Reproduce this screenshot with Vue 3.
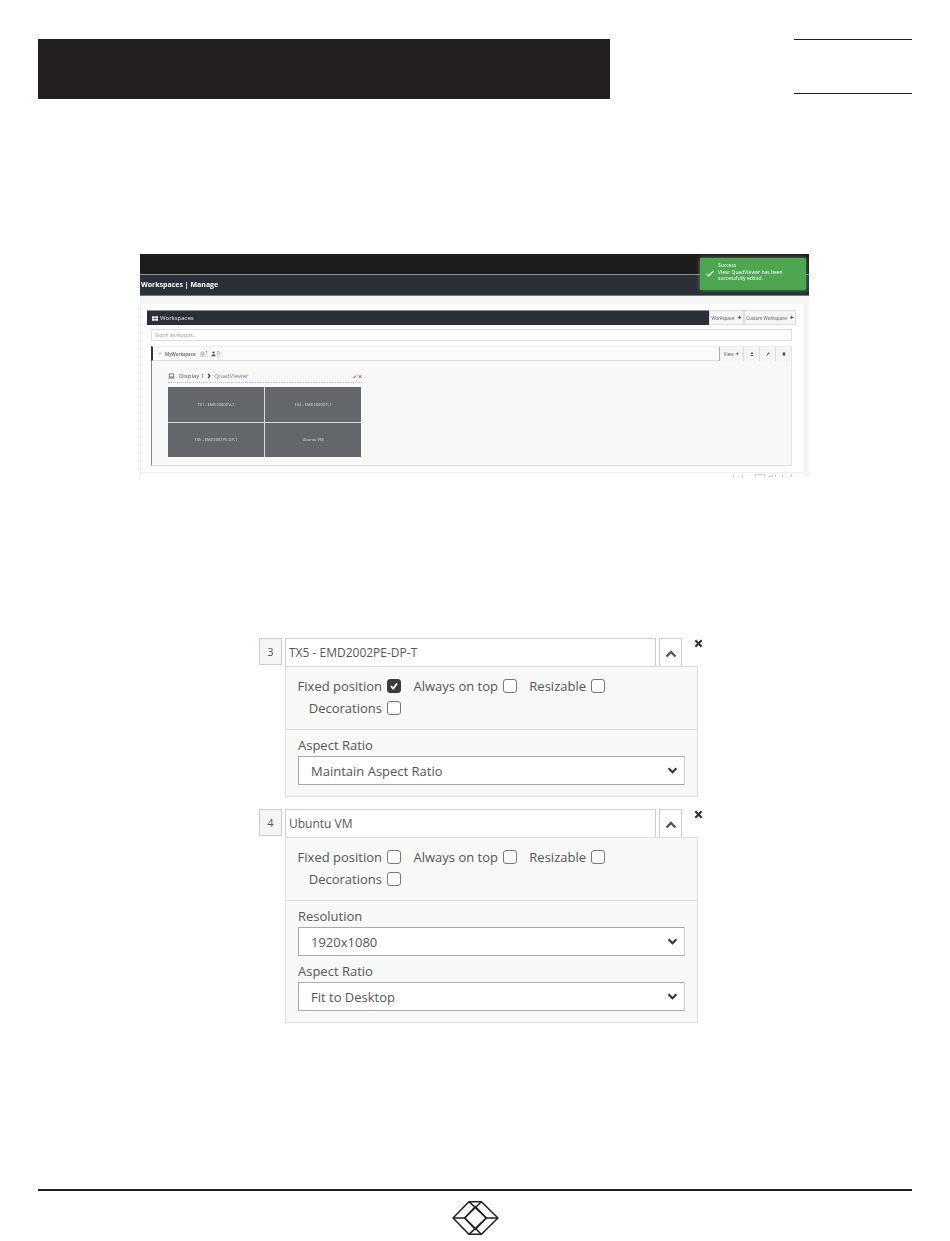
<template>
  <div class="page">
    <header class="top">
      <div class="top-bar"></div>
      <div class="top-tab"></div>
    </header>

    <!-- screenshot of the workspaces page -->
    <section class="shot">
      <div class="shot-top"></div>
      <div class="shot-nav">Workspaces | Manage</div>

      <div class="toast">
        <svg class="toast-check" viewBox="0 0 12 10"><path d="M1 5.5 4.2 8.6 11 1.4" /></svg>
        <div>
          <div>Success</div>
          <div>View: QuadViewer has been successfully edited.</div>
        </div>
      </div>

      <div class="shot-body">
        <div class="ws-panel">
          <div class="ws-head">
            <div class="ws-title">
              <svg class="ws-grid" viewBox="0 0 8 6"><path d="M0 0h3.6v2.7H0zM4.4 0H8v2.7H4.4zM0 3.3h3.6V6H0zM4.4 3.3H8V6H4.4z" /></svg>
              Workspaces
            </div>
            <div class="ws-btn w1">Workspace <b>+</b></div>
            <div class="ws-btn w2">Custom Workspace <b>+</b></div>
          </div>

          <div class="ws-search">Search workspaces...</div>

          <div class="ws-item">
            <div class="ws-item-head">
              <svg class="ws-chev" viewBox="0 0 8 5"><path d="M1 4 4 1l3 3" /></svg>
              <span class="ws-name">MyWorkspace</span>
              <span class="ws-count">
                <svg viewBox="0 0 10 8"><path d="M2 1h6v4.5H2zM.5 7h9" /></svg>1
              </span>
              <span class="ws-count">
                <svg viewBox="0 0 8 8"><circle cx="4" cy="2.4" r="1.8" class="fill" /><path d="M.8 8c0-3 6.400-3 6.400 0z" class="fill" /></svg>0
              </span>
              <div class="ws-tools">
                <span class="tool view">View <b>+</b></span>
                <span class="tool">
                  <svg viewBox="0 0 8 8"><circle cx="4" cy="2.400" r="1.800" class="fill" /><path d="M.8 8c0-3 6.400-3 6.400 0z" class="fill" /></svg>
                </span>
                <span class="tool">
                  <svg viewBox="0 0 8 8"><path d="M1.200 6.800 5 3" class="thick" /><circle cx="5.600" cy="2.400" r="1.400" class="fill" /></svg>
                </span>
                <span class="tool">
                  <svg viewBox="0 0 8 8"><path d="M1.500 1h5v6h-5z" class="fill" /></svg>
                </span>
              </div>
            </div>

            <div class="ws-item-body">
              <div class="display-row">
                <svg class="laptop" viewBox="0 0 10 8"><path d="M2 1h6v4.500H2zM.5 7h9" /></svg>
                <span>Display 1</span>
                <svg class="crumb" viewBox="0 0 6 8"><path d="M1.500 1 4.500 4 1.500 7" /></svg>
                <span class="view-link">QuadViewer</span>
                <span class="display-tools">
                  <svg viewBox="0 0 8 8"><path d="M1 7 6 2" class="thick" /></svg>
                  <svg class="red" viewBox="0 0 8 8"><path d="M1.500 1.500l5 5M6.500 1.500l-5 5" class="thick" /></svg>
                </span>
              </div>
              <div class="quad">
                <div v-for="c in quadCells" :key="c" class="quad-cell">{{ c }}</div>
              </div>
            </div>
          </div>

          <div class="pager">
            <span class="pg">«</span><span class="pg">‹</span>
            <span class="pg-input"></span><span class="pg-of">of 1</span>
            <span class="pg">›</span><span class="pg">»</span>
          </div>
        </div>
      </div>
    </section>

    <!-- window settings form -->
    <section class="form">
      <div v-for="w in windows" :key="w.num" class="win">
        <div class="win-head">
          <div class="win-num">{{ w.num }}</div>
          <div class="win-name">{{ w.name }}</div>
          <div class="win-toggle">
            <svg viewBox="0 0 12 8"><path d="M1.500 6.500 6 2l4.500 4.500" /></svg>
          </div>
          <svg class="win-close" viewBox="0 0 10 10"><path d="M1.500 1.500l7 7M8.500 1.500l-7 7" /></svg>
        </div>
        <div class="win-panel">
          <div class="opts">
            <label v-for="o in w.options" :key="o.label" class="opt">
              {{ o.label }}
              <span class="box" :class="{ checked: o.on }">
                <svg v-if="o.on" viewBox="0 0 12 12"><path d="M3 6.200 5.200 8.500 9 3.500" /></svg>
              </span>
            </label>
          </div>
          <div class="fields">
            <div v-for="f in w.fields" :key="f.label" class="field">
              <div class="field-label">{{ f.label }}</div>
              <div class="select">
                {{ f.value }}
                <svg viewBox="0 0 12 8"><path d="M1.500 1.500 6 6l4.500-4.500" /></svg>
              </div>
            </div>
          </div>
        </div>
      </div>
    </section>

    <footer class="foot">
      <svg class="logo" viewBox="0 0 139 102">
        <path d="M2 51 50 2H87L137 51 87 100H50Z" />
        <path d="M37 51 69 17 102 51 69 85Z" />
        <path d="M50 2 102 51 50 100M87 2 37 51 87 100M2 51H37M102 51H137" />
      </svg>
    </footer>
  </div>
</template>

<script setup>
const quadCells = ['TX1 - EMD2000DV-T', 'TX4 - EMD2000DP-T', 'TX5 - EMD2002PE-DP-T', 'Ubuntu VM']

const windows = [
  {
    num: 3,
    name: 'TX5 - EMD2002PE-DP-T',
    options: [
      { label: 'Fixed position', on: true },
      { label: 'Always on top', on: false },
      { label: 'Resizable', on: false },
      { label: 'Decorations', on: false }
    ],
    fields: [{ label: 'Aspect Ratio', value: 'Maintain Aspect Ratio' }]
  },
  {
    num: 4,
    name: 'Ubuntu VM',
    options: [
      { label: 'Fixed position', on: false },
      { label: 'Always on top', on: false },
      { label: 'Resizable', on: false },
      { label: 'Decorations', on: false }
    ],
    fields: [
      { label: 'Resolution', value: '1920x1080' },
      { label: 'Aspect Ratio', value: 'Fit to Desktop' }
    ]
  }
]
</script>

<style>
body { background: #fff; }
</style>

<style scoped>
.page {
  width: 950px;
  height: 1241px;
  overflow: hidden;
  background: #fff;
  font-family: "Open Sans", "Noto Sans", sans-serif;
  color: #555;
}

/* page header */
.top {
  display: flex;
  justify-content: space-between;
  padding: 39px 38px 0;
}
.top-bar { width: 572px; height: 60px; background: #231f20; }
.top-tab {
  width: 118px;
  height: 55px;
  box-sizing: border-box;
  border-top: 1.5px solid #231f20;
  border-bottom: 1.5px solid #231f20;
}

/* screenshot */
.shot {
  position: relative;
  width: 669px;
  height: 223px;
  margin: 155px 0 0 140px;
  overflow: hidden;
  background: #f5f5f5;
  filter: blur(0.35px);
}
.shot-top {
  height: 20px;
  background: #1c1c1c;
  border-bottom: 1px solid #8f8f8f;
}
.shot-nav {
  box-sizing: border-box;
  height: 21px;
  padding-left: 1px;
  background: #2a2f38;
  border-bottom: 1px solid #777;
  color: #fff;
  font-size: 7px;
  font-weight: 700;
  line-height: 20px;
}
.toast {
  position: absolute;
  top: 4px;
  left: 560px;
  width: 106px;
  height: 32px;
  box-sizing: border-box;
  padding: 4px 8px 0 18px;
  background: #4ea650;
  box-shadow: 0 0 4px rgba(120, 200, 120, .7);
  border-radius: 1px;
  color: #fff;
  font-size: 5px;
  line-height: 6.5px;
}
.toast-check {
  position: absolute;
  left: 6px;
  top: 12px;
  width: 8px;
  height: 7px;
  fill: none;
  stroke: #fff;
  stroke-width: 2;
}
.shot-body { padding-top: 8px; }
.ws-panel {
  width: 663px;
  height: 175px;
  box-sizing: border-box;
  padding-top: 6px;
  background: #fff;
  border-left: 1px dotted #ddd;
}
.ws-head {
  display: flex;
  height: 15px;
  margin-left: 6px;
  width: 649px;
}
.ws-title {
  flex: 1;
  display: flex;
  align-items: center;
  gap: 2px;
  padding-left: 5px;
  background: #2a2f38;
  border-top: 1px solid #8f8f8f;
  color: #e8e8e8;
  font-size: 6px;
}
.ws-grid { width: 6px; height: 5px; fill: #fff; }
.ws-btn {
  display: flex;
  align-items: center;
  justify-content: center;
  gap: 3px;
  box-sizing: border-box;
  background: #f5f5f5;
  border: 1px solid #ddd;
  font-size: 4.5px;
  color: #555;
}
.ws-btn b { font-size: 7px; color: #333; }
.w1 { width: 35px; }
.w2 { width: 52px; }
.ws-search {
  box-sizing: border-box;
  height: 12px;
  margin: 4px 10px 0 10px;
  width: 641px;
  padding-left: 3px;
  border: 1px solid #ddd;
  font-size: 4.5px;
  font-style: italic;
  line-height: 10px;
  color: #999;
}
.ws-item {
  width: 641px;
  height: 120px;
  margin: 5px 0 0 10px;
  box-sizing: border-box;
  border-left: 1px solid #888;
  background: #f8f8f8;
  border-bottom: 1px solid #ddd;
  border-right: 1px solid #e5e5e5;
}
.ws-item-head {
  display: flex;
  align-items: center;
  height: 15px;
  box-sizing: border-box;
  padding-left: 5px;
  margin-left: -1px;
  border-left: 2px solid #333;
  border-top: 1px solid #eee;
  border-bottom: 1px solid #ddd;
  background: #fbfbfb;
  font-size: 4.5px;
}
.ws-chev { width: 4px; height: 3px; margin-right: 3px; fill: none; stroke: #555; stroke-width: 1; }
.ws-name { font-weight: 600; margin-right: 4px; color: #555; }
.ws-count { display: inline-flex; align-items: center; gap: 1px; margin-right: 3px; border-bottom: 1px dotted #ccc; }
.ws-count svg { width: 5px; height: 5px; fill: none; stroke: #555; stroke-width: .8; }
svg .fill { fill: #444; stroke: none; }
svg .thick { fill: none; stroke: #333; stroke-width: 1.8; }
.ws-tools { display: flex; height: 14px; margin-left: auto; }
.tool {
  display: flex;
  align-items: center;
  justify-content: center;
  gap: 2px;
  width: 15px;
  background: #f5f5f5;
  border-left: 1px solid #ddd;
}
.tool svg { width: 4px; height: 4px; }
.tool b { font-size: 6px; color: #444; }
.tool.view { width: 23px; border-left: 1px solid #aaa; }
.ws-item-body { padding: 10px 0 0 16px; }
.display-row {
  display: flex;
  align-items: center;
  gap: 3px;
  width: 194px;
  height: 10px;
  padding-bottom: 1px;
  border-bottom: 1px dotted #bbb;
  font-size: 6px;
  color: #555;
}
.laptop { width: 7px; height: 6px; margin-right: 1px; fill: none; stroke: #444; stroke-width: 1; }
.crumb { width: 4px; height: 6px; fill: none; stroke: #333; stroke-width: 1.6; }
.view-link { color: #6d8296; }
.display-tools { display: flex; gap: 1px; margin-left: auto; }
.display-tools svg { width: 4px; height: 5px; }
.display-tools .red path { stroke: #c0272d; }
.quad {
  display: grid;
  grid-template-columns: 1fr 1fr;
  grid-template-rows: 1fr 1fr;
  gap: 1px;
  width: 193px;
  height: 70px;
  margin: 4px 0 0 0;
  background: #ddd;
}
.quad-cell {
  display: flex;
  align-items: center;
  justify-content: center;
  background: #63666a;
  color: #ddd;
  font-size: 4px;
}
.pager {
  display: flex;
  justify-content: flex-end;
  align-items: flex-start;
  gap: 1px;
  height: 6px;
  margin-top: 6px;
  padding-right: 4px;
  border-top: 1px solid #eee;
  padding-top: 1px;
  font-size: 5px;
  color: #888;
}
.pg { width: 7px; text-align: center; border-left: 1px solid #ccc; }
.pg-input { width: 10px; height: 6px; margin-left: 4px; border: 1px solid #ccc; box-sizing: border-box; }
.pg-of { margin: 0 4px 0 2px; }

/* window settings */
.form { margin: 161px 0 0 259px; width: 460px; }
.win + .win { margin-top: 12px; }
.win-head { display: flex; height: 28px; gap: 3px; }
.win-num {
  width: 23px;
  height: 27px;
  box-sizing: border-box;
  border: 1px solid #ccc;
  background: #f5f5f5;
  text-align: center;
  font-size: 11px;
  line-height: 25px;
  color: #555;
}
.win-name {
  width: 371px;
  box-sizing: border-box;
  padding-left: 3px;
  border: 1px solid #ccc;
  border-bottom: none;
  font-size: 12px;
  line-height: 27px;
  color: #555;
}
.win-toggle {
  display: flex;
  align-items: center;
  justify-content: center;
  width: 23px;
  box-sizing: border-box;
  border: 1px solid #ccc;
  border-bottom: none;
}
.win-toggle svg { width: 12px; height: 8px; margin-top: 3px; fill: none; stroke: #555; stroke-width: 2.4; }
.win-close {
  width: 9px;
  height: 9px;
  margin: 1px 0 0 9px;
  fill: none;
  stroke: #333;
  stroke-width: 2.4;
}
.win-panel {
  margin-left: 26px;
  width: 413px;
  box-sizing: border-box;
  border: 1px solid #ddd;
  background: #f8f8f8;
}
.opts {
  display: grid;
  grid-template-columns: 104px 105px 77px;
  grid-auto-rows: 22px;
  column-gap: 11px;
  justify-items: end;
  align-items: center;
  padding: 8px 0 10px 11px;
  border-bottom: 1px solid #ddd;
}
.opt {
  display: flex;
  align-items: center;
  gap: 5px;
  font-size: 13px;
  color: #555;
  white-space: nowrap;
}
.box {
  display: flex;
  width: 14px;
  height: 14px;
  box-sizing: border-box;
  border: 1px solid #777;
  border-radius: 3px;
  background: #fff;
}
.box.checked { background: #3c3c3c; border-color: #3c3c3c; }
.box svg { width: 12px; height: 12px; fill: none; stroke: #fff; stroke-width: 1.800; }
.fields { padding: 7px 12px 11px; }
.field + .field { margin-top: 7px; }
.field-label { height: 16px; font-size: 13px; line-height: 16px; color: #555; }
.select {
  display: flex;
  align-items: center;
  justify-content: space-between;
  width: 387px;
  height: 29px;
  margin-top: 3px;
  box-sizing: border-box;
  padding: 0 6px 0 12px;
  background: #fff;
  border: 1px solid #aaa;
  border-right-color: #ccc;
  font-size: 13px;
  color: #555;
}
.select svg { width: 11px; height: 7px; fill: none; stroke: #333; stroke-width: 2.400; }

/* footer */
.foot {
  margin: 0 38px;
  position: relative;
  top: 166px;
  height: 50px;
  border-top: 2px solid #231f20;
  display: flex;
  justify-content: center;
  padding-top: 10px;
}
.logo {
  width: 47px;
  height: 34px;
  fill: none;
  stroke: #231f20;
  stroke-width: 4.500;
}
</style>
